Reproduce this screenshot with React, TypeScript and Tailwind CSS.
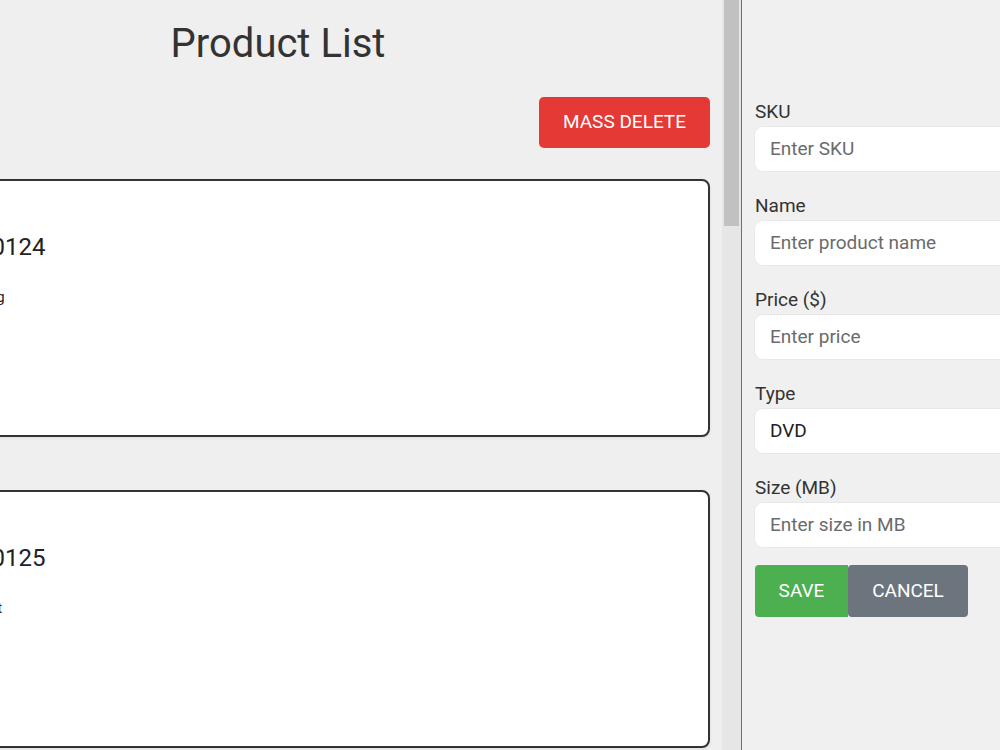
import React from "react";

const font = { fontFamily: "Roboto, 'Liberation Sans', sans-serif" };

function Card({ sku, name }: { sku: string; name: string }) {
  return (
    <div className="h-[258px] rounded-[8px] border-2 border-[#333] bg-white pl-4 pt-[50px] shadow-[0_1px_3px_rgba(0,0,0,0.08)]">
      <div className="text-[24px] leading-[32px] text-[#222] whitespace-nowrap">{sku}</div>
      <div className="mt-[24px] text-[15px] leading-[20px] text-[#222] whitespace-nowrap">{name}</div>
    </div>
  );
}

function Field({ label, placeholder, value }: { label: string; placeholder?: string; value?: string }) {
  return (
    <div className="mb-[24px]">
      <div className="text-[19px] leading-[21px] text-[#333]">{label}</div>
      <div
        className={
          "mt-[5px] flex h-[44px] w-full items-center rounded-[8px] bg-white pl-[15px] text-[19px] shadow-[0_0_0_1px_rgba(0,0,0,0.03)] " +
          (value ? "text-[#222]" : "text-[#6b6b6b]")
        }
      >
        {value ?? placeholder}
      </div>
    </div>
  );
}

export default function App() {
  return (
    <div className="flex h-[750px] w-[1000px] overflow-hidden bg-[#efefef]" style={font}>
      <div className="w-[722px] shrink-0 overflow-hidden">
        <div className="ml-[-154px] w-[864px]">
          <h1 className="mt-[20px] text-center text-[40px] leading-[48px] text-[#333]">Product List</h1>
          <div className="mt-[29px] flex justify-end">
            <button className="h-[51px] rounded-[5px] bg-[#e53935] px-6 text-[19px] uppercase text-white">
              Mass Delete
            </button>
          </div>
          <div className="mt-[31px] flex flex-col gap-[53px]">
            <Card sku="SKU: JVC200124" name="Name: Acme Casting" />
            <Card sku="SKU: JVC200125" name="Name: Mini Discs Kit" />
          </div>
        </div>
      </div>
      <div className="flex w-[19px] shrink-0 flex-col bg-[#e6e6e6] pl-[2px] pr-[2px]">
        <div className="h-[226px] w-full bg-[#c1c1c1]" />
      </div>
      <div className="w-[1px] shrink-0 bg-[#6f6f6f]" />
      <div className="flex-1 overflow-hidden bg-[#f0f0f0] pl-[13px] pt-[101px]">
        <div className="w-[300px]">
          <Field label="SKU" placeholder="Enter SKU" />
          <Field label="Name" placeholder="Enter product name" />
          <Field label="Price ($)" placeholder="Enter price" />
          <Field label="Type" value="DVD" />
          <Field label="Size (MB)" placeholder="Enter size in MB" />
          <div className="mt-[-6px] flex">
            <button className="h-[52px] w-[93px] rounded-l-[4px] bg-[#4caf50] text-[19px] text-white">SAVE</button>
            <button className="h-[52px] w-[120px] rounded-[4px] bg-[#6c757d] text-[19px] text-white">CANCEL</button>
          </div>
        </div>
      </div>
    </div>
  );
}
